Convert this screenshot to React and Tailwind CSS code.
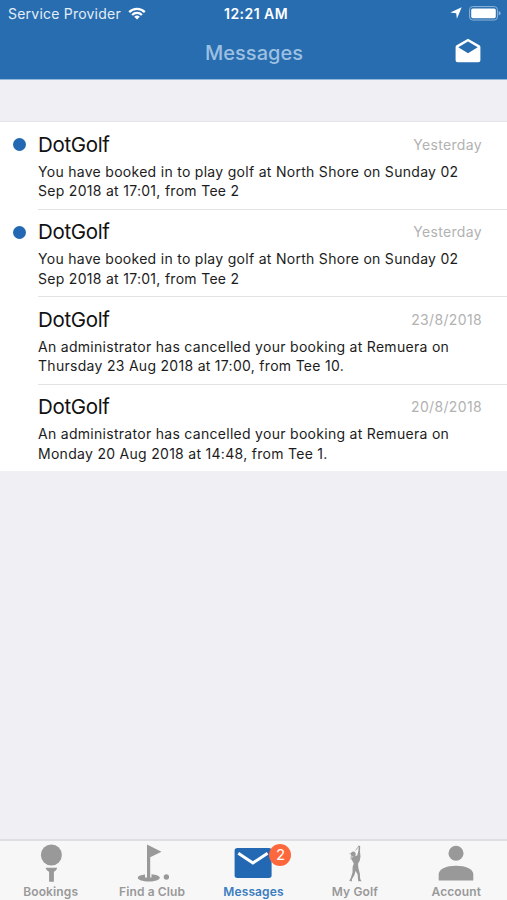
const MESSAGES = [
  {
    id: 1,
    sender: 'DotGolf',
    date: 'Yesterday',
    lines: ['You have booked in to play golf at North Shore on Sunday 02', 'Sep 2018 at 17:01, from Tee 2'],
    unread: true,
  },
  {
    id: 2,
    sender: 'DotGolf',
    date: 'Yesterday',
    lines: ['You have booked in to play golf at North Shore on Sunday 02', 'Sep 2018 at 17:01, from Tee 2'],
    unread: true,
  },
  {
    id: 3,
    sender: 'DotGolf',
    date: '23/8/2018',
    lines: ['An administrator has cancelled your booking at Remuera on', 'Thursday 23 Aug 2018 at 17:00, from Tee 10.'],
    unread: false,
  },
  {
    id: 4,
    sender: 'DotGolf',
    date: '20/8/2018',
    lines: ['An administrator has cancelled your booking at Remuera on', 'Monday 20 Aug 2018 at 14:48, from Tee 1.'],
    unread: false,
  },
];

function WifiIcon() {
  return (
    <svg width="18" height="13" viewBox="0 0 18 13" fill="none" stroke="white" strokeWidth="2.3" aria-hidden>
      <path d="M1.2 5.1a11 11 0 0 1 15.6 0" />
      <path d="M4.1 8a6.9 6.9 0 0 1 9.8 0" />
      <path d="M9 12.6 6.2 9.8a4 4 0 0 1 5.6 0z" fill="white" stroke="none" />
    </svg>
  );
}

function BatteryIcon() {
  return (
    <svg width="32" height="15" viewBox="0 0 32 15" aria-hidden>
      <rect x="0.6" y="0.6" width="27.8" height="13.4" rx="3" fill="none" stroke="#8fb5da" strokeWidth="1" />
      <rect x="2.2" y="2.4" width="24.6" height="9.8" rx="1.6" fill="white" />
      <path d="M29.7 5v4.4c1.3-.5 1.9-1.2 1.9-2.2S31 5.5 29.7 5z" fill="#8fb5da" />
    </svg>
  );
}

function StatusBar() {
  return (
    <div className="flex h-[26px] items-center text-white">
      <div className="flex flex-1 items-center gap-[7px] pl-2">
        <span className="text-[14px] tracking-[0.22px] whitespace-nowrap text-[#e3eef8]">Service Provider</span>
        <WifiIcon />
      </div>
      <span className="pl-[3px] text-[14px] font-semibold tracking-[0.45px] whitespace-nowrap">12:21 AM</span>
      <div className="flex flex-1 items-center justify-end gap-[7px] pr-[6px]">
        <svg width="12" height="12" viewBox="0 0 12 12" fill="white" aria-hidden>
          <path d="M11.7 .3 6.9 11.7 6.2 6.3 .3 5.5z" />
        </svg>
        <BatteryIcon />
      </div>
    </div>
  );
}

function MessageRow({ message, last }) {
  return (
    <li className="flex h-[87.5px] last:h-[86.5px]">
      <div className="w-[38px] shrink-0 pt-[16px] pl-[13px]">
        {message.unread && <div className="size-[13px] rounded-full bg-[#2268b2]" />}
      </div>
      <div className={`flex-1 ${last ? '' : 'border-b border-[#e3e3e5]'}`}>
        <div className="flex h-[39.5px] items-center justify-between pt-[6px] pr-[25px]">
          <span className="text-[20.5px] leading-6 tracking-[-0.35px] text-[#111]">{message.sender}</span>
          <span className="text-[14px] leading-6 tracking-[0.35px] text-[#b2b2b2]">{message.date}</span>
        </div>
        <div className="text-[14px] leading-[19.5px] tracking-[0.29px] whitespace-nowrap text-[#1c1c1c]">
          {message.lines.map((line) => (
            <div key={line}>{line}</div>
          ))}
        </div>
      </div>
    </li>
  );
}

function BookingsIcon() {
  return (
    <svg width="24" height="38" viewBox="0 0 24 38" fill="currentColor" aria-hidden>
      <circle cx="12.4" cy="11" r="10.5" />
      <path d="M6.7 23.7h11.4c-.2 1.9-1.5 3.2-3.2 4v10h-4.8v-10c-1.9-.9-3.2-2.2-3.4-4z" />
    </svg>
  );
}

function ClubIcon() {
  return (
    <svg width="34" height="38" viewBox="0 0 34 38" fill="currentColor" aria-hidden>
      <path d="M12 .5 26.5 7.7 15.2 13.2V34H12z" />
      <path d="M10 30.4C5.8 30.7 2.8 32 2.8 33.8c0 2.1 4.8 3.7 11 3.7s11-1.600 11-3.700c0-1.800-3.700-3.200-8.300-3.500v3.200H10z" />
      <circle cx="31.4" cy="33" r="2.7" />
    </svg>
  );
}

// swing finish: arms raised, club hanging behind the head
function GolferIcon() {
  return (
    <svg width="18" height="38" viewBox="0 0 18 38" fill="currentColor" aria-hidden>
      <path d="M12.700 1.200 14.200 2.200 14 7.500 14.500 12.500 13.800 16.500 12 19.800 12.400 24 13.800 29.500 14.200 35 15.600 37.300 12.200 37.200 11.700 30.800 9.600 26.800 8.400 31 5.800 35.600 6 37.400 3.200 36.700 4.700 34.300 6.500 28.500 6.600 23 7.800 19.600 6.300 16.800 5.200 14.400 7.200 12.600 11.200 11.600 12.400 6.800z" />
      <ellipse cx="7.300" cy="10.100" rx="2.400" ry="2.700" />
      <path d="M3.600 10 9 8.300M5 15.500l.3-3.700M9.500 6.500l3.500-4.500" fill="none" stroke="currentColor" strokeWidth=".8" />
    </svg>
  );
}

function MailIcon() {
  return (
    <svg width="38" height="32" viewBox="0 0 38 32" aria-hidden>
      <rect x="0.6" y="1" width="37" height="30" rx="2.7" fill="#2268b2" />
      <path d="m4.3 6.2 14.6 9.7 14.7-9.7" fill="none" stroke="white" strokeWidth="3" />
    </svg>
  );
}

function AccountIcon() {
  return (
    <svg width="36" height="37" viewBox="0 0 36 37" fill="currentColor" aria-hidden>
      <circle cx="18" cy="8.2" r="7.5" />
      <path d="M.7 35.5v-6.2C.7 24 8.5 20.7 18 20.7s17.3 3.3 17.3 8.6v6.200z" />
    </svg>
  );
}

const TABS = [
  { label: 'Bookings', icon: <BookingsIcon /> },
  { label: 'Find a Club', icon: <ClubIcon /> },
  { label: 'Messages', icon: <MailIcon />, active: true, badge: 2 },
  { label: 'My Golf', icon: <GolferIcon /> },
  { label: 'Account', icon: <AccountIcon /> },
];

function TabBar() {
  return (
    <nav className="grid h-[61px] grid-cols-5 border-t-2 border-[#dedee3] bg-[#f7f7f8]">
      {TABS.map((tab) => (
        <button
          key={tab.label}
          type="button"
          className={`flex flex-col items-center ${tab.active ? 'text-[#3b7dc0]' : 'text-[#999]'}`}
        >
          <div className="relative flex h-[44px] items-center">
            {tab.icon}
            {tab.badge && (
              <span className="absolute top-[3px] left-[35px] flex size-[22px] items-center justify-center rounded-full bg-[#fc683c] text-[15px] text-white">
                {tab.badge}
              </span>
            )}
          </div>
          <span className="text-[12px] leading-[14px] font-semibold tracking-[0.12px] whitespace-nowrap">
            {tab.label}
          </span>
        </button>
      ))}
    </nav>
  );
}

export default function App() {
  return (
    <div className="flex h-[900px] w-[507px] flex-col overflow-hidden bg-[#efeff4] font-['Inter',sans-serif]">
      <header className="h-20 shrink-0 border-b border-[#94b9dc] bg-[#286daf]">
        <StatusBar />
        <div className="grid h-[52px] grid-cols-[1fr_auto_1fr] items-center">
          <h1 className="col-start-2 pt-px pl-px text-[20px] font-medium tracking-[0.05px] text-[#9dc0e2]">Messages</h1>
          <button type="button" aria-label="Mark all as read" className="mr-[26px] mb-[4px] justify-self-end">
            <svg width="26" height="25" viewBox="0 0 26 25" fill="white" aria-hidden>
              <path
                fillRule="evenodd"
                d="M13 .7 24.4 7.2c.7.5 1 1.1 1 1.900v13c0 1.400-.8 2.200-2.200 2.200H2.800C1.400 24.300.6 23.500.6 22.100v-13c0-.8.3-1.400 1-1.900zM13 3.600 3.300 9.200 13 15.300l9.700-6.100z"
              />
            </svg>
          </button>
        </div>
      </header>
      <main className="flex-1">
        <ul className="mt-[41px] border-t border-[#e4e4e8] bg-white">
          {MESSAGES.map((message, i) => (
            <MessageRow key={message.id} message={message} last={i === MESSAGES.length - 1} />
          ))}
        </ul>
      </main>
      <TabBar />
    </div>
  );
}
